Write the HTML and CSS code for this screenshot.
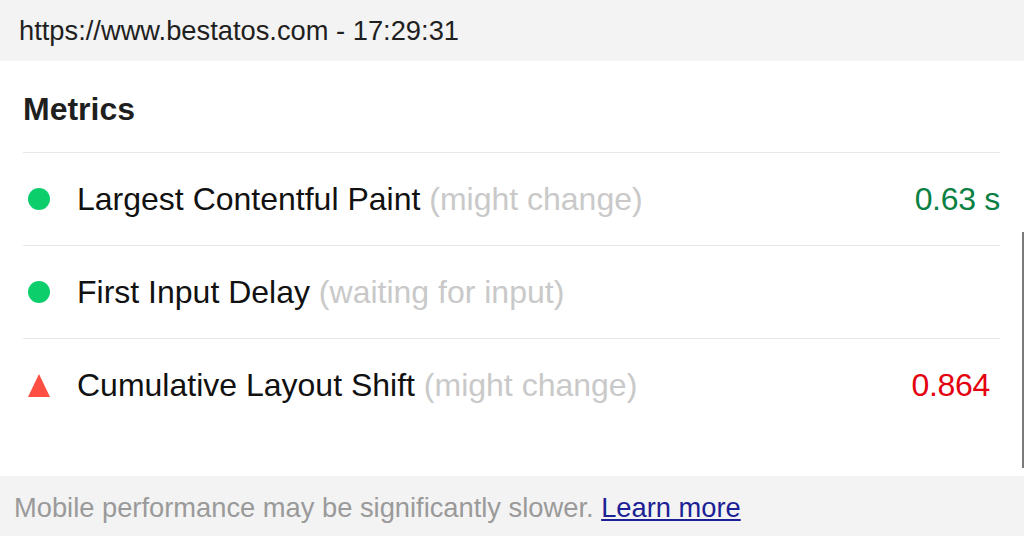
FILE: index.html
```html
<!DOCTYPE html>
<html>
<head>
<meta charset="utf-8">
<link rel="stylesheet" href="styles.css">
</head>
<body>
<div class="page">
  <header class="top">https://www.bestatos.com - 17:29:31</header>
  <main class="metrics">
    <h2 class="title">Metrics</h2>
    <div class="row">
      <span class="icon"><svg width="22" height="22" viewBox="0 0 22 22"><circle cx="11" cy="11" r="11" fill="#0cce6b"/></svg></span>
      <span class="label">Largest Contentful Paint <span class="note">(might change)</span></span>
      <span class="value good">0.63 s</span>
    </div>
    <div class="row">
      <span class="icon"><svg width="22" height="22" viewBox="0 0 22 22"><circle cx="11" cy="11" r="11" fill="#0cce6b"/></svg></span>
      <span class="label">First Input Delay <span class="note">(waiting for input)</span></span>
    </div>
    <div class="row last">
      <span class="icon"><svg width="22" height="23" viewBox="0 0 22 23"><polygon points="11,0 22,23 0,23" fill="#ff4e42"/></svg></span>
      <span class="label">Cumulative Layout Shift <span class="note">(might change)</span></span>
      <span class="value bad">0.864</span>
    </div>
  </main>
  <footer class="foot">Mobile performance may be significantly slower. <a class="link" href="#">Learn more</a></footer>
  <div class="scroll"></div>
</div>
</body>
</html>
```

FILE: styles.css
```css
html, body {
  margin: 0;
  padding: 0;
  background: #fff;
}
.page {
  position: relative;
  width: 1024px;
  height: 536px;
  overflow: hidden;
  display: flex;
  flex-direction: column;
  font-family: "Liberation Sans", Arial, sans-serif;
}
.top {
  height: 61px;
  flex: none;
  display: flex;
  align-items: center;
  padding-left: 19px;
  background: #f3f3f3;
  color: #1f1f1f;
  font-size: 27.3px;
}
.metrics {
  flex: 1;
  padding: 0 24px 0 23px;
}
.title {
  margin: 32px 0 0;
  padding-bottom: 27px;
  font-size: 32px;
  line-height: 32px;
  font-weight: bold;
  color: #1f1f1f;
  border-bottom: 1px solid #e8e8e8;
}
.row {
  height: 92px;
  display: flex;
  align-items: center;
  border-bottom: 1px solid #e8e8e8;
  font-size: 32px;
  line-height: 1;
}
.row.last {
  border-bottom: none;
}
.icon {
  width: 22px;
  margin-left: 5px;
  margin-right: 27px;
  display: flex;
  align-items: center;
}
.label {
  flex: 1;
  color: #111;
}
.note {
  color: #c9c9c9;
}
.value {
  letter-spacing: -0.3px;
}
.good {
  color: #0a8043;
}
.bad {
  color: #e4000f;
  margin-right: 10px;
}
.foot {
  height: 60px;
  flex: none;
  box-sizing: border-box;
  padding-top: 3px;
  display: flex;
  align-items: center;
  padding-left: 14px;
  background: #f3f3f3;
  color: #9a9a9a;
  font-size: 27.3px;
  white-space: pre;
}
.link {
  color: #1c1f96;
  text-decoration: underline;
}
.scroll {
  position: absolute;
  left: 1022px;
  top: 232px;
  width: 2px;
  height: 236px;
  background: #7a7a7a;
}
```
